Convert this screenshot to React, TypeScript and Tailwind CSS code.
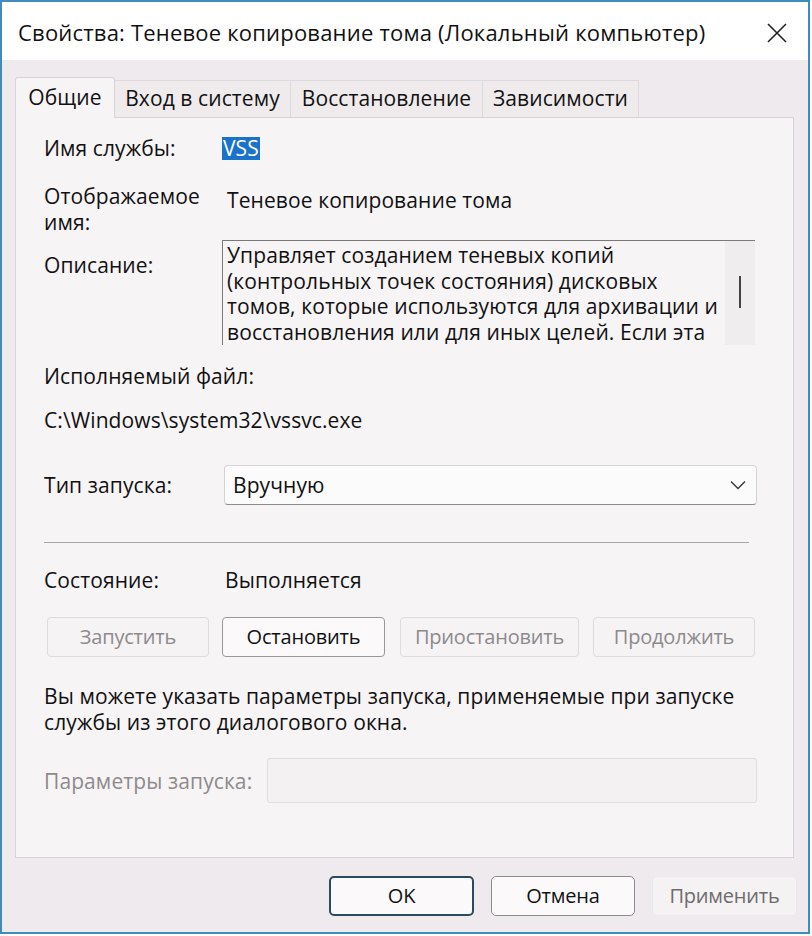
import React from "react";

const font = { fontFamily: '"Open Sans", "Liberation Sans", Arial, sans-serif' };

function Tab({ label, w, active }: { label: string; w: string; active?: boolean }) {
  if (active) {
    return (
      <div className={"relative z-10 -mb-px flex h-[41px] items-center justify-center rounded-t-[3px] border border-b-0 border-[#d6d2d5] bg-[#f7f4f6] " + w}>
        {label}
      </div>
    );
  }
  return (
    <div className={"flex h-[37px] items-center justify-center border border-b-0 border-l-0 border-[#dcd8db] bg-[#efebed] " + w}>
      {label}
    </div>
  );
}

function StateButton({ label, w, enabled }: { label: string; w: string; enabled?: boolean }) {
  return (
    <div
      className={
        "flex h-[40px] items-center justify-center rounded-[4px] border text-[20px] tracking-[-0.2px] " +
        w +
        (enabled
          ? " border-[#9a9799] bg-[#fbf9fa] text-[#111]"
          : " border-[#dedadd] bg-[#f6f3f5] text-[#8d8a8c]")
      }
    >
      {label}
    </div>
  );
}

export default function App() {
  return (
    <div className="min-h-[936px] w-[812px] bg-white whitespace-nowrap text-[21px] tracking-[0.1px]" style={font}>
      <div className="flex h-[934px] w-[810px] flex-col border-2 border-[#3d8cb9] bg-[#efeaed]">
        {/* title bar */}
        <div className="flex h-[58px] items-center justify-between bg-white pl-[16px] pr-[18px] pt-[3px]">
          <div className="text-[22px] tracking-[0.2px] text-[#111]">Свойства: Теневое копирование тома (Локальный компьютер)</div>
          <svg width="22" height="22" viewBox="0 0 22 22" className="mr-[2px]">
            <path d="M2 2 L20 20 M20 2 L2 20" stroke="#222" strokeWidth="1.6" fill="none" />
          </svg>
        </div>

        {/* tabs */}
        <div className="ml-[13px] mt-[17px] flex items-end text-[#111]">
          <Tab label="Общие" w="w-[100px]" active />
          <Tab label="Вход в систему" w="w-[176px]" />
          <Tab label="Восстановление" w="w-[192px]" />
          <Tab label="Зависимости" w="w-[156px]" />
        </div>

        {/* panel */}
        <div className="ml-[13px] flex h-[741px] w-[779px] flex-col border border-[#d6d2d5] bg-[#f7f4f6] pl-[28px] pt-[17px] leading-[26px] text-[#111]">
          <div className="flex h-[26px] items-center">
            <div className="w-[178px]">Имя службы:</div>
            <span className="bg-[#1a73c9] px-[1px] leading-[23px] text-white">VSS</span>
          </div>

          <div className="mt-[22px] flex h-[52px]">
            <div className="w-[183px]">
              Отображаемое
              <br />
              имя:
            </div>
            <div className="pt-[4px]">Теневое копирование тома</div>
          </div>

          <div className="mt-[5px] flex h-[105px]">
            <div className="w-[178px] pt-[12px]">Описание:</div>
            <div className="flex w-[533px] border-l border-t border-[#7c797b]">
              <div className="flex-1 overflow-hidden pl-[4px] pt-[2px] leading-[25.5px]">
                Управляет созданием теневых копий
                <br />
                (контрольных точек состояния) дисковых
                <br />
                томов, которые используются для архивации и
                <br />
                восстановления или для иных целей. Если эта
              </div>
              <div className="flex w-[30px] justify-center bg-[#f0edef] pt-[35px]">
                <div className="h-[32px] w-[2px] bg-[#444]" />
              </div>
            </div>
          </div>

          <div className="mt-[18px] h-[26px]">Исполняемый файл:</div>
          <div className="mt-[18px] h-[26px]">C:\Windows\system32\vssvc.exe</div>

          <div className="mt-[32px] flex h-[40px] items-center">
            <div className="w-[180px]">Тип запуска:</div>
            <div className="flex h-[40px] w-[533px] items-center justify-between rounded-[4px] border border-[#d5d2d4] border-b-[#8e8b8d] bg-[#fcfbfc] pl-[8px] pr-[10px]">
              <span>Вручную</span>
              <svg width="16" height="10" viewBox="0 0 16 10">
                <path d="M1 1.5 L8 8.5 L15 1.5" stroke="#333" strokeWidth="1.3" fill="none" />
              </svg>
            </div>
          </div>

          <div className="mt-[37px] h-px w-[705px] bg-[#a9a6a8]" />

          <div className="mt-[24px] flex h-[26px] items-center">
            <div className="w-[181px]">Состояние:</div>
            <div>Выполняется</div>
          </div>

          <div className="ml-[3px] mt-[24px] flex">
            <StateButton label="Запустить" w="w-[162px]" />
            <div className="ml-[13px]">
              <StateButton label="Остановить" w="w-[163px]" enabled />
            </div>
            <div className="ml-[15px]">
              <StateButton label="Приостановить" w="w-[179px]" />
            </div>
            <div className="ml-[14px]">
              <StateButton label="Продолжить" w="w-[162px]" />
            </div>
          </div>

          <div className="mt-[26px]">
            Вы можете указать параметры запуска, применяемые при запуске
            <br />
            службы из этого диалогового окна.
          </div>

          <div className="mt-[23px] flex h-[45px] items-center">
            <div className="w-[223px] text-[#8d8a8c]">Параметры запуска:</div>
            <div className="h-[45px] w-[490px] rounded-[3px] border border-[#e0dcdf] bg-[#f4f1f3]" />
          </div>
        </div>

        {/* footer */}
        <div className="mt-[18px] flex justify-end gap-[17px] pr-[11px] text-[20px] tracking-[-0.2px]">
          <div className="flex h-[40px] w-[145px] items-center justify-center rounded-[5px] border-2 border-[#2b4a5e] bg-[#fbf9fa] text-[#111]">OK</div>
          <div className="flex h-[40px] w-[144px] items-center justify-center rounded-[5px] border border-[#8f8c8e] bg-[#fbf9fa] text-[#111]">Отмена</div>
          <div className="flex h-[40px] w-[145px] items-center justify-center rounded-[4px] border border-[#ebe7ea] bg-[#f5f2f4] text-[#6e6b6d]">Применить</div>
        </div>
      </div>
    </div>
  );
}
